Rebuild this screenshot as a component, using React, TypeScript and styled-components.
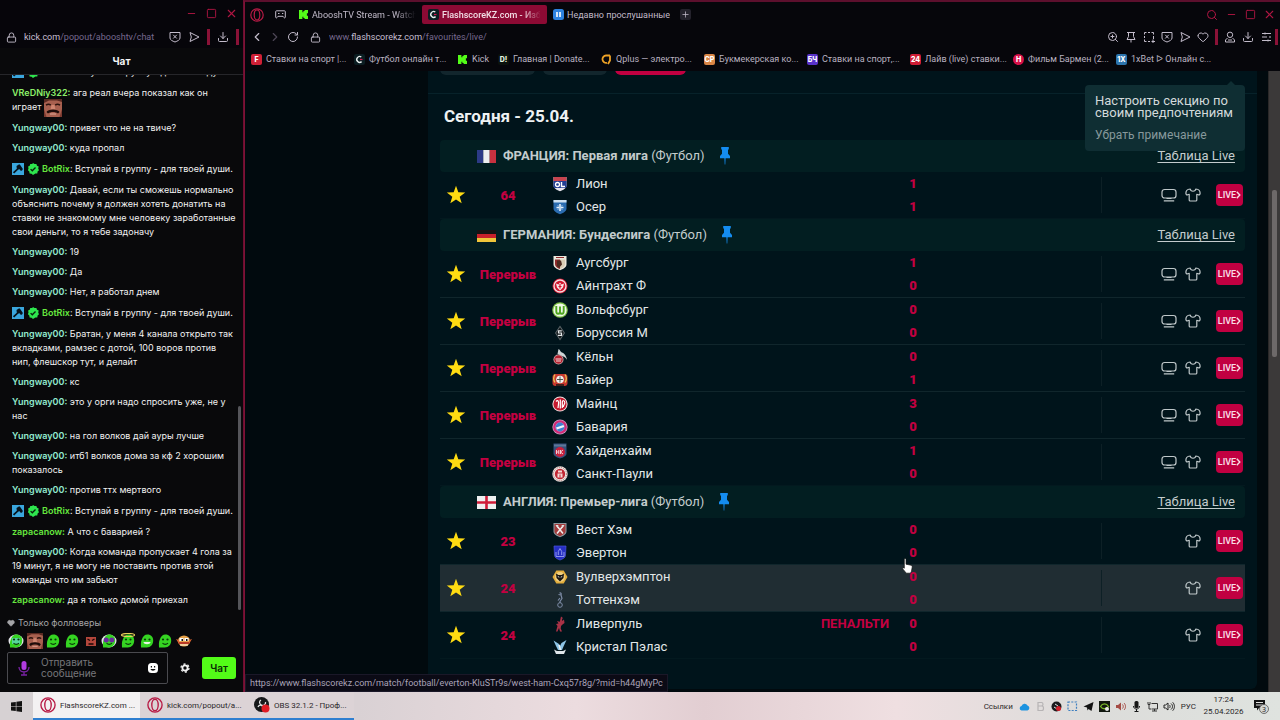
import React from "react";
import styled, { createGlobalStyle } from "styled-components";
import {
  ChevronLeft,
  ChevronRight,
  Download,
  Heart,
  Lock,
  Minus,
  Plus,
  RotateCw,
  Search,
  Square,
  X,
  ZoomIn,
} from "lucide-react";

const chatFont = `Inter, "Noto Sans", sans-serif`;
const chromeFont = `Roboto, "Open Sans", sans-serif`;

const GlobalStyle = createGlobalStyle`
  *, *::before, *::after { box-sizing: border-box; }
  body { margin: 0; background: #050508; font-family: ${chromeFont}; }
  button, input, textarea { font: inherit; color: inherit; }
  button { background: none; border: 0; padding: 0; }
  h1, h2, ul, p { margin: 0; padding: 0; }
  ul { list-style: none; }
  svg { display: block; flex: none; }
`;

const Desktop = styled.div`
  height: 100vh;
  display: grid;
  grid-template-columns: 244px minmax(0, 1fr);
  grid-template-rows: minmax(0, 1fr) 28px;
`;

/* ---------- shared window chrome ---------- */

const IconButton = styled.button<{ $tone?: "red" | "dim" }>`
  display: flex;
  align-items: center;
  justify-content: center;
  width: 12px;
  height: 16px;
  flex: none;
  color: ${(p) => (p.$tone === "red" ? "#b01643" : p.$tone === "dim" ? "#4d4656" : "#c3bccb")};
`;

const RedMark = styled.span<{ $edge?: boolean }>`
  width: 3px;
  height: 16px;
  flex: none;
  margin-left: ${(p) => (p.$edge ? "-3px" : "0")};
  background: #8a1237;
`;

const Address = styled.span`
  flex: 1;
  min-width: 0;
  white-space: nowrap;
  overflow: hidden;
  font-family: ${chromeFont};
  font-size: 9px;
  line-height: 14px;
  color: #76698f;
  b { font-weight: 400; color: #c6bfd2; }
`;

/* ---------- chat window ---------- */

const ChatWindow = styled.section`
  display: flex;
  flex-direction: column;
  min-height: 0;
  background: #09090b;
  border-right: 1px solid #6d0f31;
  font-family: ${chatFont};
`;

const ChatTitleBar = styled.div`
  height: 26px;
  display: flex;
  justify-content: flex-end;
  align-items: center;
  gap: 8px;
  padding: 0 6px 0 0;
  background: #06050a;
`;

const ChatAddressBar = styled.div`
  height: 22px;
  display: flex;
  align-items: center;
  gap: 7px;
  padding: 0 4px 0 5px;
  background: #06050a;
`;

const ChatHeading = styled.h2`
  height: 27px;
  border-bottom: 1px solid #26262a;
  text-align: center;
  font-size: 10px;
  line-height: 27px;
  font-weight: 700;
  color: #f5f5f5;
`;

const Messages = styled.ul`
  flex: 1;
  min-height: 0;
  overflow: hidden;
  position: relative;
  display: flex;
  flex-direction: column;
  justify-content: flex-end;
  gap: 6px;
  padding: 0 4px 4px 12px;
`;

const Message = styled.li`
  flex: none;
  font-size: 9px;
  line-height: 14px;
  white-space: pre-line;
  color: #f2f2f2;
`;

const BotMessage = styled(Message)`
  display: flex;
  align-items: center;
  gap: 3px;
  line-height: 16px;
  white-space: nowrap;
`;

const Author = styled.b<{ $color: string }>`
  font-weight: 600;
  color: ${(p) => p.$color};
`;

const InlineEmote = styled.span`
  display: inline-block;
  vertical-align: middle;
  height: 14px;
  svg { margin-top: -2px; }
`;

const ChatThumb = styled.span`
  position: absolute;
  right: 2px;
  bottom: 1px;
  width: 3px;
  height: 38%;
  border-radius: 2px;
  background: #55555a;
`;

const ChatFooter = styled.form`
  display: flex;
  flex-direction: column;
  padding: 5px 7px 8px;
`;

const FollowersOnly = styled.p`
  display: flex;
  align-items: center;
  gap: 3px;
  font-size: 9px;
  line-height: 14px;
  color: #a5a5a8;
`;

const EmoteRow = styled.div`
  display: flex;
  justify-content: space-between;
  height: 22px;
  align-items: center;
  padding: 0 44px 0 1px;
`;

const EmoteButton = styled.button`
  width: 16px;
  height: 16px;
`;

const ComposeRow = styled.div`
  display: flex;
  align-items: center;
  gap: 11px;
`;

const InputBox = styled.label`
  flex: 1;
  min-width: 0;
  height: 32px;
  display: flex;
  align-items: center;
  gap: 10px;
  padding: 0 9px;
  border: 1px solid #4a4a4f;
  border-radius: 2px;
`;

const ChatInput = styled.textarea`
  flex: 1;
  min-width: 0;
  width: 0;
  height: 24px;
  padding: 1px 0;
  border: 0;
  resize: none;
  overflow: hidden;
  background: none;
  font-size: 10px;
  line-height: 11px;
  &::placeholder { color: #77777b; }
`;

const SendButton = styled.button`
  width: 34px;
  height: 22px;
  border-radius: 3px;
  background: #53fc18;
  color: #0b2a05;
  font-size: 10px;
  font-weight: 600;
`;

/* ---------- browser window ---------- */

const BrowserWindow = styled.section`
  display: flex;
  flex-direction: column;
  min-height: 0;
  min-width: 0;
  position: relative;
  background: #06060b;
  border-top: 2px solid #5c0f2d;
  border-left: 1px solid #7d1236;
`;

const TabStrip = styled.div`
  height: 25px;
  display: flex;
  align-items: center;
  padding: 0 5px 0 6px;
`;

const TabTools = styled.div`
  display: flex;
  gap: 11px;
  margin-right: 6px;
`;

const Tab = styled.button<{ $width?: number; $active?: boolean }>`
  display: flex;
  align-items: center;
  gap: 3px;
  width: ${(p) => (p.$width ? `${p.$width}px` : "auto")};
  height: 19px;
  padding: 0 6px;
  border-radius: 2px;
  background: ${(p) => (p.$active ? "#8c0a34" : "transparent")};
  color: ${(p) => (p.$active ? "#f2dfe6" : "#c0b9c8")};
  font-size: 9px;
  font-weight: ${(p) => (p.$active ? 500 : 400)};
  white-space: nowrap;
  span {
    overflow: hidden;
    mask-image: ${(p) => (p.$width ? "linear-gradient(90deg, #000 80%, transparent)" : "none")};
  }
`;

const NewTab = styled(IconButton)`
  width: 11px;
  height: 11px;
  margin-left: 4px;
  border-radius: 2px;
  background: #24222c;
`;

const Spacer = styled.span`
  flex: 1;
`;

const WindowButtons = styled.div`
  display: flex;
  gap: 7px;
`;

const AddressBar = styled.div`
  height: 20px;
  display: flex;
  align-items: center;
  gap: 6px;
  padding: 0 2px 0 6px;
`;

const SiteInfo = styled(IconButton)`
  margin-left: 4px;
  margin-right: 2px;
`;

const Tools = styled.div`
  display: flex;
  gap: 6px;
`;

const Bookmarks = styled.nav`
  height: 24px;
  display: flex;
  align-items: center;
  padding-left: 6px;
`;

const Bookmark = styled.a<{ $short?: boolean }>`
  display: flex;
  align-items: center;
  gap: 4px;
  width: ${(p) => (p.$short ? "41px" : "103px")};
  flex: none;
  font-size: 9px;
  line-height: 14px;
  white-space: nowrap;
  color: #b9b2c0;
  text-decoration: none;
`;

const Viewport = styled.div`
  flex: 1;
  min-height: 0;
  display: flex;
  overflow: hidden;
  background: #010a0e;
`;

const Panel = styled.main`
  flex: 1;
  min-width: 0;
  margin: 0 11px 3px 183px;
  padding: 0 12px;
  background: #00141b;
  border-radius: 0 0 6px 6px;
  position: relative;
`;

const PageScrollbar = styled.div`
  width: 12px;
  padding: 119px 3px 0;
  background: #3b3939;
  border-left: 1px solid #2a2828;
`;

const PageThumb = styled.div`
  height: 167px;
  background: #6d6969;
  border-radius: 2px;
`;

const Filters = styled.div`
  height: 23px;
  margin: 0 -12px;
  padding: 0 12px;
  border-bottom: 1px solid #07222a;
`;

const FilterClip = styled.div`
  display: flex;
  align-items: flex-end;
  gap: 8px;
  height: 4px;
  overflow: hidden;
`;

const Filter = styled.button<{ $width: number; $active?: boolean }>`
  width: ${(p) => p.$width}px;
  height: 24px;
  flex: none;
  border-radius: 6px;
  background: ${(p) => (p.$active ? "#c10041" : "#12262d")};
`;

const DayHeading = styled.h1`
  height: 46px;
  padding-left: 4px;
  font-size: 17px;
  line-height: 44px;
  font-weight: 700;
  color: #eef2f3;
`;

const LeagueHeader = styled.header`
  height: 32px;
  display: flex;
  align-items: center;
  gap: 7px;
  padding: 0 10px 0 37px;
  border-radius: 4px;
  background: #021e21;
  font-size: 13px;
  line-height: 16px;
  color: #c3cccd;
`;

const LeagueName = styled.h2`
  font-size: 13px;
  font-weight: 700;
  span { font-weight: 400; }
`;

const PinButton = styled.button`
  margin-left: 8px;
`;

const TableLink = styled.a`
  margin-left: auto;
  color: #c3cccd;
  text-underline-offset: 2px;
`;

const MatchRow = styled.li<{ $hover?: boolean }>`
  height: 47px;
  display: grid;
  grid-template-columns: 32px 72px minmax(0, 1fr) 24px 176px 144px;
  align-items: center;
  border-bottom: 1px solid #10262c;
  background: ${(p) => (p.$hover ? "#202d33" : "transparent")};
  color: #e2e7e8;
  font-size: 13px;
  &:last-child { border-bottom-color: #03191f; }
`;

const StarButton = styled.button`
  display: flex;
  justify-content: center;
`;

const Clock = styled.span`
  text-align: center;
  font-weight: 900;
  font-size: 13px;
  color: #c30041;
  white-space: nowrap;
`;

const Teams = styled.div`
  display: grid;
  grid-template-rows: 23px 23px;
  padding-left: 8px;
`;

const Team = styled.div`
  display: flex;
  align-items: center;
  gap: 8px;
`;

const Event = styled.em`
  margin-left: auto;
  padding-right: 12px;
  font-style: normal;
  font-weight: 700;
  color: #c30041;
`;

const Scores = styled.div`
  display: grid;
  grid-template-rows: 23px 23px;
  align-items: center;
  text-align: center;
  font-weight: 900;
  color: #c30041;
`;

const Actions = styled.div`
  grid-column: 6;
  height: 36px;
  display: flex;
  align-items: center;
  justify-content: flex-end;
  gap: 8px;
  padding-right: 2px;
  border-left: 1px solid #0d2026;
`;

const ActionButton = styled.button`
  display: flex;
  color: #bfc8ca;
`;

const LiveButton = styled.button`
  display: flex;
  align-items: center;
  justify-content: center;
  width: 27px;
  height: 22px;
  margin-left: 7px;
  border-radius: 4px;
  background: #c10041;
  color: #f7dce6;
  font-size: 9px;
  font-weight: 600;
`;

const Hint = styled.aside`
  position: absolute;
  top: 14px;
  right: 12px;
  width: 160px;
  padding: 10px 10px 9px;
  border-radius: 4px;
  background: #0f2e33;
  color: #d3dadb;
  font-size: 13px;
  line-height: 12px;
  &::before {
    content: "";
    position: absolute;
    top: -4px;
    right: 9px;
    border: 5px solid transparent;
    border-top: 0;
    border-bottom-color: #0f2e33;
  }
`;

const HintDismiss = styled.button`
  display: block;
  margin-top: 9px;
  color: #87999c;
  font-size: 12px;
  line-height: 14px;
`;

const StatusUrl = styled.div`
  position: absolute;
  left: 0;
  bottom: 0;
  height: 18px;
  padding: 0 4px;
  background: #0b0a15;
  border: 1px solid #1a1828;
  color: #aaa3b8;
  font-size: 9px;
  line-height: 16px;
`;

const Pointer = styled.svg`
  position: absolute;
  left: 657px;
  top: 556px;
`;

/* ---------- taskbar ---------- */

const Taskbar = styled.footer`
  grid-column: 1 / -1;
  display: flex;
  align-items: center;
  background: linear-gradient(90deg, #d6d1d3 0%, #d9d1d4 28%, #ecdcdf 45%, #e2ced2 55%, #efdfe1 70%, #dcdcda 85%, #dfe3df 100%);
  color: #2b282a;
  font-size: 8px;
`;

const StartButton = styled.button`
  width: 33px;
  display: flex;
  justify-content: center;
`;

const TaskButton = styled.button<{ $active?: boolean }>`
  width: 107px;
  height: 28px;
  display: flex;
  align-items: center;
  gap: 4px;
  padding: 0 7px;
  border-bottom: 2px solid #2f7fd0;
  background: ${(p) => (p.$active ? "#f3f1f2" : "#dcd3d6")};
  white-space: nowrap;
`;

const Tray = styled.div`
  margin-left: auto;
  display: flex;
  align-items: center;
  gap: 5px;
  padding-right: 10px;
`;

const TrayLabel = styled.span`
  margin: 0 1px;
`;

const ClockText = styled.time`
  display: block;
  width: 43px;
  text-align: center;
  line-height: 12px;
`;

/* ---------- drawings ---------- */

const OperaMark = ({ size = 14 }: { size?: number }) => (
  <svg width={size} height={size} viewBox="0 0 14 14" fill="none" stroke="#b81b46">
    <circle cx="7" cy="7" r="6.2" strokeWidth="1.2" />
    <ellipse cx="7" cy="7" rx="2.8" ry="5" strokeWidth="1.2" />
  </svg>
);

const ShieldIcon = () => (
  <svg width="12" height="12" viewBox="0 0 12 12" fill="none" stroke="currentColor">
    <path d="M1 1.500h10v5.500c0 2-2.500 3-5 4-2.500-1-5-2-5-4zM4.200 3.800l3.600 3.700M7.800 3.800 4.200 7.500" />
  </svg>
);

const FlowIcon = () => (
  <svg width="12" height="12" viewBox="0 0 12 12" fill="none" stroke="currentColor" strokeLinejoin="round">
    <path d="M2 1.500 11 6l-9 4.500L3.300 6z" />
  </svg>
);

const PinIcon = () => (
  <svg width="12" height="12" viewBox="0 0 12 12" fill="none" stroke="currentColor">
    <path d="M2 1.500h8M3.500 1.500v4L2 8.500h8L8.500 5.500v-4M6 8.500V11.500" />
  </svg>
);

const KickMark = () => (
  <svg width="11" height="11" viewBox="0 0 11 11" fill="#53fc18">
    <path d="M1 1h3.400v2.200h1V2.100h1.200V1H10v3.300H8.900v2.400H10V10H6.600V8.900H5.400V7.800h-1V10H1z" />
  </svg>
);

const Badge = ({ bg, fg, text, round }: { bg: string; fg: string; text: string; round?: boolean }) => (
  <svg width="11" height="11" viewBox="0 0 11 11">
    <rect width="11" height="11" rx={round ? 5.5 : 2} fill={bg} />
    <text x="5.5" y="8" textAnchor="middle" fontFamily="Inter, sans-serif" fontWeight="800" fontSize="7" fill={fg}>
      {text}
    </text>
  </svg>
);

const FlashMark = () => (
  <svg width="11" height="11" viewBox="0 0 11 11" fill="none">
    <rect width="11" height="11" rx="2" fill="#0b1d22" />
    <path d="M7.300 3A2.900 2.900 0 1 0 7.600 7.600" stroke="#e8eeee" strokeWidth="1.400" />
    <path d="M6 5.500h2.500" stroke="#d3144e" strokeWidth="1.200" />
  </svg>
);

const QMark = () => (
  <svg width="11" height="11" viewBox="0 0 11 11" fill="none" stroke="#eda126" strokeWidth="1.800">
    <path d="M9 1.500H5A3.700 3.700 0 1 0 6 8.800M9 1.500V6.500L7 10" />
  </svg>
);

const PauseMark = () => (
  <svg width="11" height="11" viewBox="0 0 11 11">
    <rect width="11" height="11" rx="2.500" fill="#2d82e0" />
    <path d="M3.200 3h1.600v5H3.200zM6.200 3h1.600v5H6.200z" fill="#fff" />
  </svg>
);

const Hammer = () => (
  <svg width="12" height="12" viewBox="0 0 12 12">
    <rect width="12" height="12" fill="#3aa6dd" />
    <path d="M4.500 3 7.200 1.300l1 .6L10.900 6l-1 1.800-1.600-.3-1-1.600-1.500 1.200L2.200 10.500.9 9.200 4.800 5.700z" fill="#06131c" />
  </svg>
);

const Verified = () => (
  <svg width="12" height="12" viewBox="0 0 12 12">
    <path d="M6 0l1.500 1.100 1.900-.2.600 1.800 1.700.9-.5 1.900.8 1.700-1.400 1.300-.3 1.900-1.900.2L6 12l-1.500-1.300-1.900-.2-.3-1.900L.9 7.200l.6-1.700-.4-1.900 1.600-.9.600-1.800 1.900.2z" fill="#2ee64e" />
    <path d="M3.600 6.100 5.300 7.800 8.500 4.500" fill="none" stroke="#08210c" strokeWidth="1.300" />
  </svg>
);

const FaceEmote = ({ size = 18 }: { size?: number }) => (
  <svg width={size} height={size} viewBox="0 0 18 18">
    <rect width="18" height="18" fill="#a8604f" />
    <path d="M0 0h18v3L13 1.500H5L0 4z" fill="#5b2a22" />
    <path d="M2 6.200c1.500-1 3.500-1 4.800 0M11.200 6.200c1.300-1 3.300-1 4.800 0" fill="none" stroke="#2b120e" strokeWidth="1.500" />
    <path d="M7.500 6h3l1 4.500h-5z" fill="#cf8570" />
    <path d="M2.500 13c1-3.500 12-3.500 13 0l-1.500 1.500c-3-2-7-2-10 0z" fill="#1d0c0a" />
    <path d="M6 14.500h6v1H6z" fill="#e0a898" />
    <path d="M0 10l2.500 8H0zM18 10l-2.500 8H18z" fill="#7c3a30" />
  </svg>
);

const GreenEmote = ({ kind }: { kind: string }) => (
  <svg width="16" height="16" viewBox="0 0 16 16">
    {kind === "ears" || kind === "shades" ? <ellipse cx="8" cy="8" rx="7.500" ry="6.500" fill="#e4e4ea" /> : null}
    <path d="M2 14.500c0-3-.5-5 .8-8C4 3 6 1.500 8.500 1.600c3.500 0 5.700 2.500 5.700 6 0 4-2.500 6.900-6.400 6.900z" fill="#35d422" />
    {kind === "ears" ? <path d="M4 5h8v6H4z" fill="#57d99a" /> : null}
    {kind === "shades" ? (
      <>
        <circle cx="5.200" cy="7" r="2.500" fill="#6a2a9e" />
        <circle cx="10.800" cy="7" r="2.500" fill="#6a2a9e" />
      </>
    ) : (
      <>
        <circle cx="6" cy="6.500" r="1.100" fill="#0b3a0b" />
        <circle cx="10.500" cy="6.500" r="1.100" fill="#0b3a0b" />
      </>
    )}
    {kind === "grin" ? <path d="M4.500 9h7c0 3-7 3-7 0z" fill="#e8f5e3" /> : <path d="M5.500 10.200c1.500 1.500 4 1.500 5.500 0" fill="none" stroke="#0b3a0b" strokeWidth="1.100" />}
    {kind === "halo" ? <ellipse cx="8" cy="2" rx="6.500" ry="1.500" fill="none" stroke="#e8cf5a" strokeWidth="1.200" /> : null}
  </svg>
);

const BoxEmote = () => (
  <svg width="16" height="16" viewBox="0 0 16 16">
    <rect x="3" y="4" width="10" height="9" fill="#b5473c" />
    <path d="M4.500 6 7 7.500M11.500 6 9 7.500M5.500 11h5" stroke="#1c0606" strokeWidth="1.300" />
  </svg>
);

const BurgerEmote = () => (
  <svg width="16" height="16" viewBox="0 0 16 16">
    <ellipse cx="8" cy="8" rx="6" ry="5.500" fill="#e7a24a" />
    <path d="M0 6l3 1v4zM16 6l-3 1v4z" fill="#d9622f" />
    <path d="M3.500 5h4v3h-4zM8.500 5h4v3h-4z" fill="#fff" />
    <path d="M5.500 6h1.500v2H5.500zM10 6h1.500v2H10z" fill="#111" />
    <path d="M3 10h10" stroke="#b02020" strokeWidth="1.600" />
    <path d="M4 12h8" stroke="#f6e7c6" strokeWidth="1.300" />
  </svg>
);

const Star = () => (
  <svg width="20" height="20" viewBox="0 0 20 20" fill="#ffdc12">
    <path d="M10 .8l2.300 6.500 6.900.2-5.500 4.200 2 6.600L10 14.400l-5.700 3.900 2-6.600L.8 7.500l6.900-.2z" />
  </svg>
);

const LeaguePin = () => (
  <svg width="10" height="18" viewBox="0 0 10 18" fill="#148cf0">
    <path d="M1.200 0h7.600v2.500H8v4.300l2 2.200v2.200H5.600L5.300 17.500h-.6L4.400 11.200H0V9l2-2.200V2.500h-.8z" />
  </svg>
);

const Tv = () => (
  <svg width="16" height="14" viewBox="0 0 16 14" fill="none" stroke="currentColor" strokeWidth="1.200">
    <rect x="1" y="1.500" width="14" height="8.500" rx="2.600" />
    <path d="M5.500 10.500h5M2.800 12.800h10.400" />
  </svg>
);

const Shirt = () => (
  <svg width="16" height="14" viewBox="0 0 16 14" fill="none" stroke="currentColor" strokeWidth="1.200" strokeLinejoin="round">
    <path d="M5.200 1C3 1.200.8 2.600.9 5.300c0 1 .6 1.700 1.700 1.500L4.200 6.300V12c0 .7.300 1 1 1h5.600c.7 0 1-.3 1-1V6.300l1.600.5c1.100.2 1.700-.5 1.700-1.500C15.200 2.600 13 1.200 10.800 1 10.300 4 5.700 4 5.200 1z" />
  </svg>
);

const Arrow = () => (
  <svg width="5" height="8" viewBox="0 0 5 8" fill="none" stroke="currentColor" strokeWidth="1.400">
    <path d="M.8.800 3.800 4 .8 7.200" />
  </svg>
);

const Flag = ({ code }: { code: string }) => (
  <svg width="19" height="13" viewBox="0 0 19 13">
    {code === "fr" && (
      <>
        <path d="M0 0h6.300v13H0z" fill="#2c3a86" />
        <path d="M6.300 0h6.400v13H6.300z" fill="#eceef0" />
        <path d="M12.700 0H19v13h-6.300z" fill="#c7313f" />
      </>
    )}
    {code === "de" && (
      <>
        <path d="M0 1h19v4H0z" fill="#171313" />
        <path d="M0 5h19v4H0z" fill="#c8202b" />
        <path d="M0 9h19v4H0z" fill="#f0c53a" />
      </>
    )}
    {code === "en" && (
      <>
        <path d="M0 0h19v13H0z" fill="#eef0f0" />
        <path d="M8.200 0h2.600v13H8.200zM0 5.200h19v2.600H0z" fill="#cf1c38" />
      </>
    )}
  </svg>
);

const shield = "M1.500 1h13v8.500c0 3-3.500 4.500-6.500 5.800C5 14 1.500 12.500 1.500 9.500z";

const crests: Record<string, React.ReactNode> = {
  lyon: (
    <>
      <path d={shield} fill="#e9e6ee" />
      <path d="M1.500 1h13v4h-13z" fill="#c8444f" />
      <path d="M1.500 5h13v6l-1 1H2.500l-1-1z" fill="#233f94" />
      <circle cx="5.500" cy="8.500" r="2" fill="none" stroke="#fff" strokeWidth="1.300" />
      <path d="M9.500 6v4.500H13" fill="none" stroke="#fff" strokeWidth="1.400" />
    </>
  ),
  auxerre: (
    <>
      <path d={shield} fill="#2b6cb0" />
      <path d="M1.500 1h13v2.500h-13z" fill="#cfe0f0" />
      <path d="M8 5v7M4.500 8.500h7" stroke="#e7f1fb" strokeWidth="1.600" />
      <path d="M5.500 6l5 5M10.500 6l-5 5" stroke="#a9cbea" strokeWidth=".8" />
    </>
  ),
  augsburg: (
    <>
      <path d={shield} fill="#ece7dc" />
      <path d="M3 4.500h5v9.500C5 13 3 11.500 3 9z" fill="#8d2a2b" />
      <path d="M8 4.500h5V9c0 2-2 4-5 5z" fill="#d9cdb5" />
      <path d="M5 5.500h4l1 4-3 3.500-2-2z" fill="#4d2a20" />
      <path d="M4 2.500h8" stroke="#8d2a2b" />
    </>
  ),
  eintracht: (
    <>
      <circle cx="8" cy="8" r="7.500" fill="#d3152d" />
      <circle cx="8" cy="8" r="6" fill="none" stroke="#f3dfe2" strokeWidth="1.300" />
      <path d="M4 5.500l2.500 1L8 4.500l1.500 2 2.500-1-1 4L8 12.500l-3-3z" fill="#f7e6e8" />
      <path d="M8 6v4.500M6.500 8.500h3" stroke="#d3152d" strokeWidth="1.200" />
    </>
  ),
  wolfsburg: (
    <>
      <circle cx="8" cy="8" r="7.800" fill="#7cc142" />
      <circle cx="8" cy="8" r="6.600" fill="#eef7e6" />
      <path d="M4.300 4v5.200c0 3.200 3.200 3.300 3.700.8.500 2.500 3.700 2.400 3.700-.8V4M8 4.500v6" fill="none" stroke="#4fa51f" strokeWidth="1.900" />
    </>
  ),
  gladbach: (
    <>
      <path d="M8 .5 13 8l-5 7.500L3 8z" fill="#5c666a" />
      <path d="M8 2.200 11.800 8 8 13.800 4.200 8z" fill="#101719" />
      <path d="M9.800 5.800H6.500V8h3v2.300H6" fill="none" stroke="#e4e8e9" strokeWidth="1.200" />
    </>
  ),
  koln: (
    <>
      <path d="M6.500 0c2 1 1.500 2.500 3 3.200 3 1 5 4 5.500 7.500-2-3-3.500-3.500-4.500-3.500L5.500 5z" fill="#cfd5d7" />
      <circle cx="6.500" cy="10.500" r="5" fill="#c9b4b4" />
      <circle cx="6.500" cy="10.500" r="4.300" fill="#b32230" />
      <path d="M3.500 10h6M4 12h5" stroke="#f3dede" />
    </>
  ),
  bayer: (
    <>
      <rect x=".5" y="2" width="15" height="12" rx="3" fill="#c8382f" />
      <path d="M3 2.500c-2 3-2 5 0 8M13 2.500c2 3 2 5 0 8" fill="none" stroke="#e7c552" strokeWidth="1.300" />
      <circle cx="8" cy="7.500" r="3.800" fill="#f1f1ee" />
      <path d="M8 4.500v6M5 7.500h6" stroke="#3e4a42" strokeWidth=".9" />
      <path d="M4 13h8" stroke="#161616" strokeWidth="1.500" />
    </>
  ),
  mainz: (
    <>
      <circle cx="8" cy="8" r="7.600" fill="#f1e4e4" />
      <circle cx="8" cy="8" r="6.600" fill="#c5192e" />
      <path d="M4 5.500c2-2 3 0 2.500 2.500L6 12M8.300 3.500v9M10.300 12V6c0-2 2.500-1.500 2.500.5S11.300 9 11.300 11" fill="none" stroke="#fff" strokeWidth="1.200" />
    </>
  ),
  bayern: (
    <>
      <circle cx="8" cy="8" r="7.600" fill="#c9a0c6" />
      <circle cx="8" cy="8" r="5.700" fill="none" stroke="#d22a76" strokeWidth="2.300" />
      <circle cx="8" cy="8" r="4.400" fill="#3f7fd0" />
      <path d="M4 8.500 11.500 6l.7 2L5 10.500z" fill="#f2f6fb" />
    </>
  ),
  heidenheim: (
    <>
      <path d="M1.500.5h13v10C14.500 13 11 14.500 8 15.500 5 14.500 1.500 13 1.500 10.500z" fill="#35517c" />
      <path d="M2 2.500h12" stroke="#5f7899" strokeWidth="2" />
      <circle cx="8" cy="9" r="5" fill="#c8203d" />
      <path d="M4.500 7v4M6.800 7v4M4.500 9h2.300M8.500 7v4M8.500 9l2.500-2M8.500 9l2.500 2" stroke="#f4dfe3" strokeWidth=".9" />
    </>
  ),
  pauli: (
    <>
      <circle cx="8" cy="8" r="7.700" fill="#eee4e2" />
      <circle cx="8" cy="8" r="6.600" fill="none" stroke="#8a4a42" strokeWidth=".7" strokeDasharray="1 1" />
      <circle cx="8" cy="8" r="5.200" fill="#c22632" />
      <path d="M5.500 11.500v-4h5v4M6 4.500h4v2H6z" fill="#f3d8d6" />
      <path d="M7.500 8.500h1v3h-1z" fill="#c22632" />
    </>
  ),
  westham: (
    <>
      <path d={shield} fill="#8d9aa0" />
      <path d="M2.500 2h11v7.300c0 2.500-3 3.700-5.500 4.900C5.500 13 2.500 11.800 2.500 9.300z" fill="#a23b3b" />
      <path d="M5 4l6 7.500M11 4l-6 7.500" stroke="#f0eeee" strokeWidth="1.500" />
      <path d="M3.500 3h3l-1 3zM12.500 3h-3l1 3z" fill="#dfe3e4" />
    </>
  ),
  everton: (
    <>
      <path d="M2 1h12l-.5 9c0 3-3 4-5.500 5-2.500-1-5.500-2-5.500-5z" fill="#262fc4" stroke="#4c55dc" strokeWidth=".7" />
      <path d="M6.300 10V6.500L8 3.500l1.700 3V10M4 7v4.500h8V7" fill="none" stroke="#9aa1f0" strokeWidth=".9" />
    </>
  ),
  wolves: (
    <>
      <path d="M4.300 1.500h7.400L15.500 8l-3.800 6.500H4.300L.5 8z" fill="#e4ae3c" />
      <circle cx="8" cy="8" r="5" fill="#f0cf80" />
      <path d="M4 4.500 6.500 6h3L12 4.500 11.500 9 8 12.500 4.500 9z" fill="#1b1712" />
      <path d="M5.800 7.500l1.500.7M10.200 7.500l-1.500.7" stroke="#fff" strokeWidth=".8" />
    </>
  ),
  tottenham: (
    <>
      <path d="M7.500 1c1.500-.5 2 .8 1.500 2l1 3.500-2 3V11M9 3 6.500 2.500M8 6 6 8.500" fill="none" stroke="#7d8ba6" strokeWidth="1.200" />
      <circle cx="8" cy="13" r="2.300" fill="none" stroke="#7d8ba6" />
    </>
  ),
  liverpool: (
    <path d="M9 .5l2 1.500-1 1 .3 2L12 3.500l.5 3.500-2 1.500L9 10l-.3 2.500L10 15.500H8L7 12l-1.500 3.500H4L5.500 10 4 8l2.500-.5L5 5l2.800.8z" fill="#a83246" />
  ),
  palace: (
    <>
      <path d="M1.500 1.500 7 5l1 2 1.500-3L14.500 1l-3 6.500L10 11H6L4 7z" fill="#8cc4e6" />
      <path d="M7 6l1.500 5" stroke="#eef3f5" strokeWidth="1.500" />
      <path d="M2 10.500l3 1.500h6l3-1.500-2 4.500H4z" fill="#dfe6ea" />
    </>
  ),
};

const Crest = ({ id }: { id: string }) => (
  <svg width="16" height="16" viewBox="0 0 16 16">
    {crests[id]}
  </svg>
);

/* ---------- data ---------- */

type Side = { name: string; crest: string; goals: number; event?: string };
type Match = { clock: string; tv: boolean; hover?: boolean; sides: [Side, Side] };
type League = { flag: string; title: string; matches: Match[] };

const m = (clock: string, tv: boolean, a: Side, b: Side, hover = false): Match => ({ clock, tv, hover, sides: [a, b] });
const s = (name: string, crest: string, goals: number, event?: string): Side => ({ name, crest, goals, event });

const leagues: League[] = [
  { flag: "fr", title: "ФРАНЦИЯ: Первая лига", matches: [m("64", true, s("Лион", "lyon", 1), s("Осер", "auxerre", 1))] },
  {
    flag: "de",
    title: "ГЕРМАНИЯ: Бундеслига",
    matches: [
      m("Перерыв", true, s("Аугсбург", "augsburg", 1), s("Айнтрахт Ф", "eintracht", 0)),
      m("Перерыв", true, s("Вольфсбург", "wolfsburg", 0), s("Боруссия М", "gladbach", 0)),
      m("Перерыв", true, s("Кёльн", "koln", 0), s("Байер", "bayer", 1)),
      m("Перерыв", true, s("Майнц", "mainz", 3), s("Бавария", "bayern", 0)),
      m("Перерыв", true, s("Хайденхайм", "heidenheim", 1), s("Санкт-Паули", "pauli", 0)),
    ],
  },
  {
    flag: "en",
    title: "АНГЛИЯ: Премьер-лига",
    matches: [
      m("23", false, s("Вест Хэм", "westham", 0), s("Эвертон", "everton", 0)),
      m("24", false, s("Вулверхэмптон", "wolves", 0), s("Тоттенхэм", "tottenham", 0), true),
      m("24", false, s("Ливерпуль", "liverpool", 0, "ПЕНАЛЬТИ"), s("Кристал Пэлас", "palace", 0)),
    ],
  },
];

const mint = "#93ebd0";
const lime = "#66e83f";
const bot = "bot";

const messages: [string, string, string, boolean?][] = [
  [bot, "", ""],
  ["VReDNiy322", "#8df06a", "ага реал вчера показал как он\nиграет", true],
  ["Yungway00", mint, "привет что не на твиче?"],
  ["Yungway00", mint, "куда пропал"],
  [bot, "", ""],
  ["Yungway00", mint, "Давай, если ты сможешь нормально объяснить почему я должен хотеть донатить на ставки не знакомому мне человеку заработанные свои деньги, то я тебе задоначу"],
  ["Yungway00", mint, "19"],
  ["Yungway00", mint, "Да"],
  ["Yungway00", mint, "Нет, я работал днем"],
  [bot, "", ""],
  ["Yungway00", mint, "Братан, у меня 4 канала открыто так вкладками, рамзес с дотой, 100 воров против\nнип, флешскор тут, и делайт"],
  ["Yungway00", mint, "кс"],
  ["Yungway00", mint, "это у орги надо спросить уже, не у\nнас"],
  ["Yungway00", mint, "на гол волков дай ауры лучше"],
  ["Yungway00", mint, "итб1 волков дома за кф 2 хорошим показалось"],
  ["Yungway00", mint, "против ттх мертвого"],
  [bot, "", ""],
  ["zapacanow", lime, "А что с баварией ?"],
  ["Yungway00", mint, "Когда команда пропускает 4 гола за\n19 минут, я не могу не поставить против этой команды что им забьют"],
  ["zapacanow", lime, "да я только домой приехал"],
];

const bookmarks: [string, React.ReactNode][] = [
  ["Ставки на спорт |...", <Badge bg="#d02036" fg="#fff" text="F" />],
  ["Футбол онлайн т...", <FlashMark />],
  ["Kick", <KickMark />],
  ["Главная | Donate...", <Badge bg="#0c120d" fg="#e6f5e2" text="D!" />],
  ["Qplus — электро...", <QMark />],
  ["Букмекерская ко...", <Badge bg="#d98545" fg="#fff" text="СР" />],
  ["Ставки на спорт,...", <Badge bg="#5932c9" fg="#fff" text="БЧ" />],
  ["Лайв (live) ставки...", <Badge bg="#cf1d35" fg="#fff" text="24" />],
  ["Фильм Бармен (2...", <Badge bg="#d70f48" fg="#fff" text="H" round />],
  ["1xBet ᐅ Онлайн с...", <Badge bg="#2c74ad" fg="#fff" text="1X" />],
];

/* ---------- screens ---------- */

const Chat = () => (
  <ChatWindow>
    <ChatTitleBar>
      <IconButton $tone="red" aria-label="Свернуть"><Minus size={11} strokeWidth={2} /></IconButton>
      <IconButton $tone="red" aria-label="Развернуть"><Square size={11} strokeWidth={2} /></IconButton>
      <IconButton $tone="red" aria-label="Закрыть"><X size={13} strokeWidth={2} /></IconButton>
    </ChatTitleBar>
    <ChatAddressBar>
      <IconButton aria-label="Сведения о сайте"><Lock size={11} /></IconButton>
      <Address><b>kick.com</b>/popout/abooshtv/chat</Address>
      <IconButton aria-label="Блокировка рекламы"><ShieldIcon /></IconButton>
      <IconButton aria-label="Поток"><FlowIcon /></IconButton>
      <RedMark />
      <IconButton aria-label="Загрузки"><Download size={12} /></IconButton>
      <RedMark />
    </ChatAddressBar>
    <ChatHeading>Чат</ChatHeading>
    <Messages>
      {messages.map(([who, color, text, emote], i) =>
        who === bot ? (
          <BotMessage key={i}>
            <Hammer />
            <Verified />
            <span><Author $color={lime}>BotRix</Author>: Вступай в группу - для твоей души.</span>
          </BotMessage>
        ) : (
          <Message key={i}>
            <Author $color={color}>{who}:</Author> {text}{" "}
            {emote ? <InlineEmote><FaceEmote /></InlineEmote> : null}
          </Message>
        )
      )}
      <ChatThumb />
    </Messages>
    <ChatFooter>
      <FollowersOnly><Heart size={8} fill="currentColor" />Только фолловеры</FollowersOnly>
      <EmoteRow>
        <EmoteButton type="button" aria-label="ears"><GreenEmote kind="ears" /></EmoteButton>
        <EmoteButton type="button" aria-label="face"><FaceEmote size={16} /></EmoteButton>
        <EmoteButton type="button" aria-label="think"><GreenEmote kind="think" /></EmoteButton>
        <EmoteButton type="button" aria-label="smile"><GreenEmote kind="smile" /></EmoteButton>
        <EmoteButton type="button" aria-label="angry"><BoxEmote /></EmoteButton>
        <EmoteButton type="button" aria-label="shades"><GreenEmote kind="shades" /></EmoteButton>
        <EmoteButton type="button" aria-label="halo"><GreenEmote kind="halo" /></EmoteButton>
        <EmoteButton type="button" aria-label="grin"><GreenEmote kind="grin" /></EmoteButton>
        <EmoteButton type="button" aria-label="wave"><GreenEmote kind="wave" /></EmoteButton>
        <EmoteButton type="button" aria-label="burger"><BurgerEmote /></EmoteButton>
      </EmoteRow>
      <ComposeRow>
        <InputBox>
          <svg width="14" height="16" viewBox="0 0 14 16" fill="none">
            <rect x="4.500" y="1" width="5" height="9" rx="2.500" fill="#b13be0" />
            <path d="M2 7c0 6.500 10 6.500 10 0M7 12v3M4 15h6" stroke="#7a22a6" strokeWidth="1.300" />
          </svg>
          <ChatInput aria-label="Сообщение" placeholder="Отправить сообщение" />
          <svg width="10" height="10" viewBox="0 0 10 10">
            <rect width="10" height="10" rx="3.500" fill="#fff" />
            <path d="M2.800 3h1.200v1.500H2.800zM6 3h1.200v1.500H6zM2.500 6h5c-.5 2.300-4.500 2.300-5 0z" fill="#111" />
          </svg>
        </InputBox>
        <IconButton type="button" aria-label="Настройки">
          <svg width="10" height="10" viewBox="0 0 10 10" fill="none" stroke="#f2f2f2">
            <circle cx="5" cy="5" r="2.600" strokeWidth="1.800" />
            <circle cx="5" cy="5" r="4" strokeWidth="1.300" strokeDasharray="2.100 2.100" />
          </svg>
        </IconButton>
        <SendButton type="button">Чат</SendButton>
      </ComposeRow>
    </ChatFooter>
  </ChatWindow>
);

const MatchLine = ({ match }: { match: Match }) => (
  <MatchRow $hover={match.hover}>
    <StarButton aria-label="Убрать из избранного"><Star /></StarButton>
    <Clock>{match.clock}</Clock>
    <Teams>
      {match.sides.map((side) => (
        <Team key={side.name}>
          <Crest id={side.crest} />
          {side.name}
          {side.event ? <Event>{side.event}</Event> : null}
        </Team>
      ))}
    </Teams>
    <Scores>
      {match.sides.map((side) => <span key={side.name}>{side.goals}</span>)}
    </Scores>
    <Actions>
      {match.tv ? <ActionButton aria-label="Трансляция"><Tv /></ActionButton> : null}
      <ActionButton aria-label="Составы"><Shirt /></ActionButton>
      <LiveButton>LIVE<Arrow /></LiveButton>
    </Actions>
  </MatchRow>
);

const Browser = () => (
  <BrowserWindow>
    <TabStrip>
      <TabTools>
        <IconButton aria-label="Меню Opera"><OperaMark /></IconButton>
        <IconButton aria-label="GX Corner">
          <svg width="11" height="9" viewBox="0 0 11 9" fill="none" stroke="currentColor">
            <path d="M1.500.8h8a.8.8 0 0 1 .8.8v5.500c0 1-1 1-1.500.3L8 6.300H3l-.8 1.100C1.700 8.100.7 8.100.7 7.100V1.600a.8.8 0 0 1 .8-.8zM3 3.500h1.500M7 3.500h1.300" />
          </svg>
        </IconButton>
      </TabTools>
      <Tab $width={130}><KickMark /><span>AbooshTV Stream - Watch Live</span></Tab>
      <Tab $width={125} $active><FlashMark /><span>FlashscoreKZ.com - Избранное</span></Tab>
      <Tab><PauseMark /><span>Недавно прослушанные</span></Tab>
      <NewTab aria-label="Новая вкладка"><Plus size={9} /></NewTab>
      <Spacer />
      <WindowButtons>
        <IconButton $tone="red" aria-label="Поиск"><Search size={12} /></IconButton>
        <IconButton $tone="red" aria-label="Свернуть"><Minus size={11} /></IconButton>
        <IconButton $tone="red" aria-label="Развернуть"><Square size={11} /></IconButton>
        <IconButton $tone="red" aria-label="Закрыть"><X size={13} /></IconButton>
      </WindowButtons>
    </TabStrip>
    <AddressBar>
      <IconButton aria-label="Назад"><ChevronLeft size={14} /></IconButton>
      <IconButton $tone="dim" aria-label="Вперёд"><ChevronRight size={14} /></IconButton>
      <IconButton aria-label="Обновить"><RotateCw size={12} /></IconButton>
      <SiteInfo aria-label="Сведения о сайте"><Lock size={11} /></SiteInfo>
      <Address>www.<b>flashscorekz.com</b>/favourites/live/</Address>
      <Tools>
        <IconButton aria-label="Масштаб"><ZoomIn size={12} /></IconButton>
        <IconButton aria-label="Закрепить"><PinIcon /></IconButton>
        <IconButton aria-label="Снимок">
          <svg width="12" height="12" viewBox="0 0 12 12" fill="none" stroke="currentColor">
            <path d="M1.500 3.500v-2h2M5 1.500h2M8.500 1.500h2v2M10.500 5v3M1.500 5v2M1.500 8.500v2h2M5 10.500h2M10 8.500v3.500M8.500 10.500H12" />
          </svg>
        </IconButton>
        <IconButton aria-label="Блокировка рекламы"><ShieldIcon /></IconButton>
        <IconButton aria-label="Поток"><FlowIcon /></IconButton>
        <IconButton aria-label="Избранное"><Heart size={12} /></IconButton>
        <RedMark />
        <IconButton aria-label="Профиль">
          <svg width="12" height="12" viewBox="0 0 12 12" fill="none" stroke="currentColor">
            <circle cx="6" cy="3.800" r="2.700" />
            <path d="M3.500 7 1.500 9v2h9V9l-2-2M4 9h4" />
          </svg>
        </IconButton>
        <IconButton aria-label="Загрузки"><Download size={12} /></IconButton>
        <IconButton aria-label="Настройки">
          <svg width="11" height="10" viewBox="0 0 11 10" fill="none" stroke="currentColor">
            <path d="M1 1.500h9M1 5h5M8 5h2M1 8.500h9M4 .5v2M7 7.500v2" />
          </svg>
        </IconButton>
        <RedMark $edge />
      </Tools>
    </AddressBar>
    <Bookmarks>
      {bookmarks.map(([text, icon]) => (
        <Bookmark key={text} href="#" $short={text === "Kick"}>{icon}{text}</Bookmark>
      ))}
    </Bookmarks>
    <Viewport>
      <Panel>
        <Filters>
          <FilterClip>
            <Filter $width={95} aria-label="Все" />
            <Filter $width={64} aria-label="Сегодня" />
            <Filter $width={71} $active aria-label="LIVE" />
          </FilterClip>
        </Filters>
        <DayHeading>Сегодня - 25.04.</DayHeading>
        {leagues.map((league) => (
          <section key={league.title}>
            <LeagueHeader>
              <Flag code={league.flag} />
              <LeagueName>{league.title} <span>(Футбол)</span></LeagueName>
              <PinButton aria-label="Открепить лигу"><LeaguePin /></PinButton>
              <TableLink href="#">Таблица Live</TableLink>
            </LeagueHeader>
            <ul>
              {league.matches.map((match) => <MatchLine key={match.sides[0].name} match={match} />)}
            </ul>
          </section>
        ))}
        <Hint>
          Настроить секцию по своим предпочтениям
          <HintDismiss>Убрать примечание</HintDismiss>
        </Hint>
      </Panel>
      <PageScrollbar><PageThumb /></PageScrollbar>
    </Viewport>
    <StatusUrl>https://www.flashscorekz.com/match/football/everton-KluSTr9s/west-ham-Cxq57r8g/?mid=h44gMyPc</StatusUrl>
    <Pointer width="11" height="16" viewBox="0 0 11 16">
      <path d="M2.300 1.200c0-1 1.700-1 1.700 0v5l5 1c1 .3 1.300 1 1.200 2l-.7 4-1 2H4.300L1 11.200c-1-1.500.3-2 1.300-1z" fill="#fff" stroke="#111" strokeWidth=".7" />
    </Pointer>
  </BrowserWindow>
);

const TaskbarView = () => (
  <Taskbar>
    <StartButton aria-label="Пуск">
      <svg width="11" height="11" viewBox="0 0 11 11" fill="#111">
        <path d="M0 1.600 4.800.9v4.300H0zM5.400.8 11 0v5.200H5.400zM0 5.800h4.800v4.300L0 9.400zM5.400 5.800H11V11l-5.600-.8z" />
      </svg>
    </StartButton>
    <TaskButton $active><OperaMark size={16} />FlashscoreKZ.com ...</TaskButton>
    <TaskButton><OperaMark size={16} />kick.com/popout/a...</TaskButton>
    <TaskButton>
      <svg width="16" height="16" viewBox="0 0 16 16">
        <circle cx="7.500" cy="7.500" r="7.500" fill="#17181a" />
        <path d="M7 3c-2 1-2 4 .5 5C10 9 12 7 11.500 5M4 10c1-2.500 3-2 4-1" fill="none" stroke="#e5e5e5" strokeWidth="1.300" />
        <circle cx="11.500" cy="11.500" r="4" fill="#e01b24" />
      </svg>
      OBS 32.1.2 - Проф...
    </TaskButton>
    <Tray>
      <TrayLabel>Ссылки</TrayLabel>
      <svg width="11" height="11" viewBox="0 0 11 11"><path d="M2.500 9.500a2.300 2.300 0 0 1 0-4.500 3.300 3.300 0 0 1 6-.5 2.600 2.600 0 0 1 0 5z" fill="#1d93e0" /></svg>
      <svg width="11" height="11" viewBox="0 0 11 11" fill="none" stroke="#b7b4b5" strokeWidth="1.200"><path d="M3 1.500h3.500c2 0 2 3.500 0 3.500H3zM3 5h4c2 0 2 4.500 0 4.500H3z" /></svg>
      <svg width="11" height="11" viewBox="0 0 11 11"><circle cx="5.500" cy="5.500" r="5" fill="#1b1b1d" /><path d="M4 3l3 2M3 6l3 2" stroke="#e5e5e5" /><circle cx="7.500" cy="7.500" r="2.500" fill="#d3202b" /></svg>
      <svg width="11" height="11" viewBox="0 0 11 11" fill="none" stroke="#3f7fc0" strokeWidth="1.200"><rect x="1" y="1" width="8.500" height="8.500" strokeDasharray="2 1.300" /></svg>
      <svg width="11" height="11" viewBox="0 0 11 11" fill="#131313"><path d="M.5 5.500 10.500 1 8.500 10 5.500 8 4.500 9.500 4 6.500z" /></svg>
      <svg width="11" height="11" viewBox="0 0 11 11"><rect width="11" height="11" fill="#11180f" /><path d="M1.500 5.500c2-3.500 6-3.500 8 0-2 3-6 3-8 0z" fill="none" stroke="#79b62a" strokeWidth="1.300" /><circle cx="8" cy="8" r="2" fill="#e8e8e8" /></svg>
      <svg width="11" height="11" viewBox="0 0 11 11" fill="none"><path d="M1 4h2l3-2.500v8L3 7H1z" fill="#a54c45" /><path d="M7.500 3.500c1 1 1 3 0 4M9 2c2 2 2 5 0 7" stroke="#a54c45" /></svg>
      <svg width="11" height="11" viewBox="0 0 11 11"><rect x="3.500" y="0" width="4" height="7" rx="1.500" fill="#161616" /><path d="M2.500 5c0 4 6 4 6 0M5.500 8v2.500M3.500 10.500h4" fill="none" stroke="#161616" /></svg>
      <svg width="11" height="11" viewBox="0 0 11 11" fill="none" stroke="#333"><path d="M4.500 2.500h6v5.500h-6M7.500 8v2M5 10h5M1 1v2.500h2V1M2 3.500V8h2" /></svg>
      <svg width="12" height="11" viewBox="0 0 12 11" fill="none" stroke="#222"><path d="M1 4h1.500L5 2v7L2.500 7H1zM6.500 4c.8.800.8 2.200 0 3M8 2.500c2 1.700 2 4.300 0 6M9.700 1.300c2.300 2.400 2.300 6 0 8.400" /></svg>
      <TrayLabel>РУС</TrayLabel>
      <ClockText>17:24<br />25.04.2026</ClockText>
      <svg width="20" height="16" viewBox="0 0 20 16">
        <path d="M4 2h11v8H9l-2 2.500V10H4z" fill="#131313" />
        <path d="M6 4.500h7M6 7h7" stroke="#e2e2e0" />
        <circle cx="14" cy="11" r="4.500" fill="#d4d6d3" stroke="#555" strokeWidth=".8" />
        <text x="14" y="13.500" textAnchor="middle" fontSize="7" fontFamily="Noto Sans, sans-serif" fill="#222">3</text>
      </svg>
    </Tray>
  </Taskbar>
);

export default function App() {
  return (
    <>
      <GlobalStyle />
      <Desktop>
        <Chat />
        <Browser />
        <TaskbarView />
      </Desktop>
    </>
  );
}
